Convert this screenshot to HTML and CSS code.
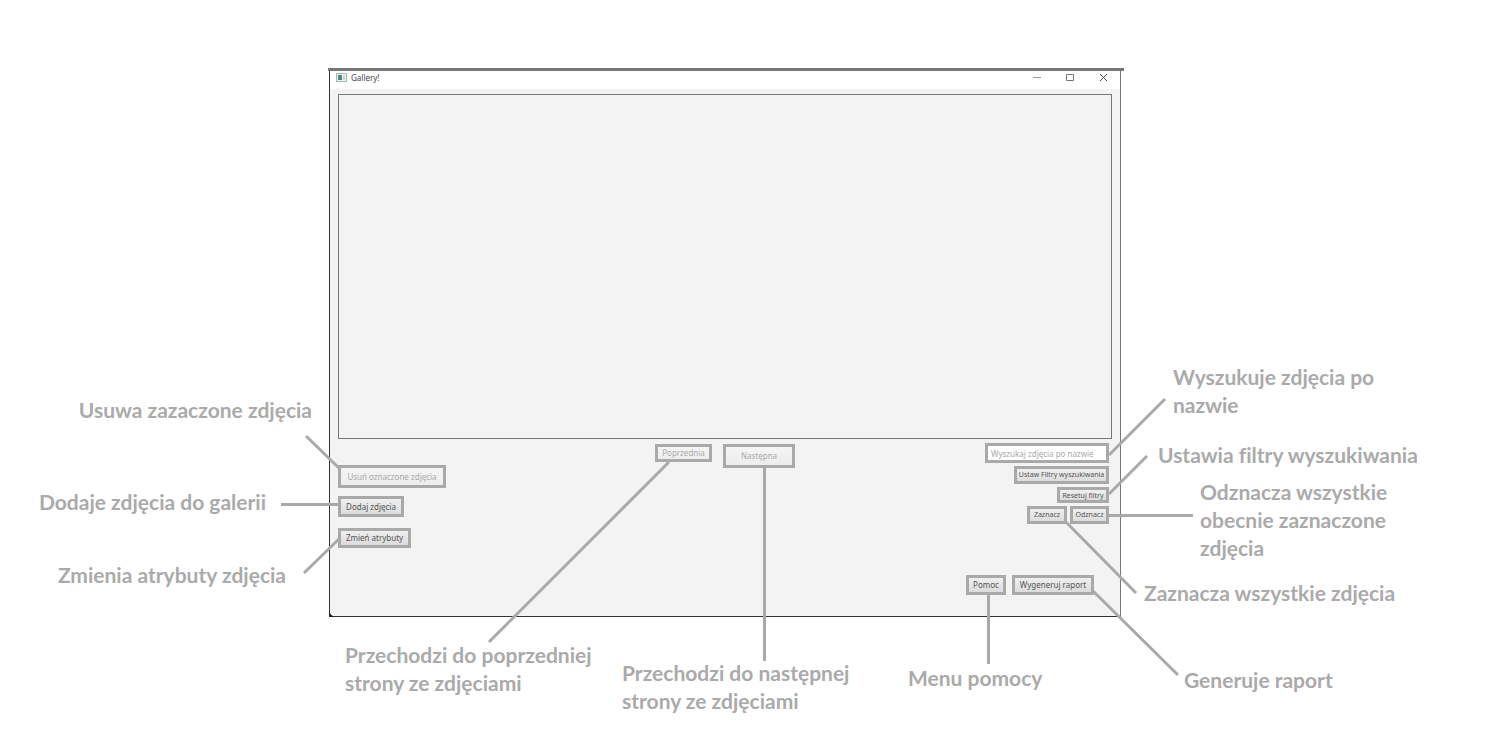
FILE: index.html
```html
<!DOCTYPE html>
<html lang="pl">
<head>
<meta charset="utf-8">
<title>Gallery!</title>
<link rel="stylesheet" href="styles.css">
</head>
<body>
<main class="guide">
  <div class="notes notes-left">
    <p class="note note-delete">Usuwa zazaczone zdjęcia</p>
    <p class="note note-add">Dodaje zdjęcia do galerii</p>
    <p class="note note-edit">Zmienia atrybuty zdjęcia</p>
  </div>

  <div class="stage">
    <section class="window">
      <header class="titlebar">
        <svg class="app-icon" viewBox="0 0 11 9" aria-hidden="true">
          <rect x="0.5" y="0.5" width="10" height="8" fill="#eef3f3" stroke="#a9b6b8"/>
          <rect x="2" y="2" width="4" height="5" fill="#4f8a7c"/>
          <rect x="7" y="2" width="2" height="5" fill="#c8d8d4"/>
        </svg>
        <h1 class="title">Gallery!</h1>
        <button class="win-button" type="button" aria-label="Minimalizuj"><svg viewBox="0 0 9 9"><path d="M0 4.5h8" stroke="#999"/></svg></button>
        <button class="win-button" type="button" aria-label="Maksymalizuj"><svg viewBox="0 0 9 9"><path d="M0.5 1.5h7v6h-7z" stroke="#777"/></svg></button>
        <button class="win-button" type="button" aria-label="Zamknij"><svg viewBox="0 0 9 9"><path d="M1 1l7 7M8 1l-7 7" stroke="#444"/></svg></button>
      </header>
      <div class="content">
        <div class="gallery"></div>
        <div class="controls">
          <div class="actions">
            <button class="button button-delete" type="button" disabled>Usuń oznaczone zdjęcia</button>
            <button class="button button-add" type="button">Dodaj zdjęcia</button>
            <button class="button button-edit" type="button">Zmień atrybuty</button>
          </div>
          <div class="pager">
            <button class="button button-previous" type="button" disabled>Poprzednia</button>
            <button class="button button-next" type="button" disabled>Następna</button>
          </div>
          <div class="tools">
            <input class="search" type="text" placeholder="Wyszukaj zdjęcia po nazwie" aria-label="Wyszukaj zdjęcia po nazwie">
            <button class="button small button-filters" type="button">Ustaw Filtry wyszukiwania</button>
            <button class="button small button-reset" type="button">Resetuj filtry</button>
            <div class="selection">
              <button class="button small button-select" type="button">Zaznacz</button>
              <button class="button small button-deselect" type="button">Odznacz</button>
            </div>
            <div class="reports">
              <button class="button button-help" type="button">Pomoc</button>
              <button class="button button-report" type="button">Wygeneruj raport</button>
            </div>
          </div>
        </div>
      </div>
    </section>
    <svg class="lines lines-left" viewBox="0 0 20 20" aria-hidden="true">
      <path d="M-23 368L11 401M-48 436.5H9M-25 505L10 471"/>
      <path d="M0 542V549H7Q1 548 0 542Z" fill="#222" stroke="none"/>
    </svg>
    <svg class="lines lines-center" viewBox="0 0 20 20" aria-hidden="true">
      <path d="M-236 574L-56 394M39.5 399V593"/>
    </svg>
    <svg class="lines lines-right" viewBox="0 0 20 20" aria-hidden="true">
      <path d="M8 387L64 331M8 426L46 388M8 447.5H92M-35 454L35 525M-112.500 527V596M-8 523L77 607"/>
    </svg>
  </div>

  <div class="notes notes-right">
    <p class="note note-search">Wyszukuje zdjęcia po nazwie</p>
    <p class="note note-filters">Ustawia filtry wyszukiwania</p>
    <p class="note note-deselect">Odznacza wszystkie obecnie zaznaczone zdjęcia</p>
    <p class="note note-select">Zaznacza wszystkie zdjęcia</p>
  </div>

  <div class="notes-bottom">
    <p class="note note-previous">Przechodzi do poprzedniej strony ze zdjęciami</p>
    <p class="note note-next">Przechodzi do następnej strony ze zdjęciami</p>
    <p class="note note-help">Menu pomocy</p>
  </div>
  <p class="note note-report">Generuje raport</p>
</main>
</body>
</html>
```
FILE: styles.css
```css
* { box-sizing: border-box; }

body {
  margin: 0;
  background: #fff;
  font-family: "Noto Sans", "Open Sans", sans-serif;
}

.guide {
  display: grid;
  grid-template-columns: 329px minmax(640px, 1fr) 364px;
  padding: 68px 0 32px;
}

.note {
  margin: 0;
  color: #aaa;
  font: 700 21px/28px Lato, "Open Sans", sans-serif;
  font-variant-ligatures: none;
}

.notes { display: flex; flex-direction: column; }

.notes-left {
  align-items: flex-end;
  padding-top: 328px;
  white-space: nowrap;
}
.note-delete { margin-right: 17px; }
.note-add { margin: 64px 63px 0 0; }
.note-edit { margin: 45px 43px 0 0; }

.notes-right { padding-top: 295px; }
.note-search { width: 230px; margin-left: 52px; }
.note-filters { margin: 22px 0 0 37px; }
.note-deselect { width: 220px; margin: 9px 0 0 79px; }
.note-select { margin: 17px 0 0 23px; }

.notes-bottom {
  grid-column: 2;
  display: flex;
  align-items: flex-start;
  padding: 24px 0 0 16px;
}
.note-previous { width: 277px; padding-right: 16px; }
.note-next { width: 286px; padding: 18px 40px 0 0; }
.note-help { padding-top: 23px; }
.note-report { padding: 49px 0 0 63px; }

.stage { position: relative; }

.window {
  border: solid #333;
  border-width: 0 1px 1px;
  border-right-color: #777;
  background: #f3f3f3;
}

/* The top edge runs slightly past both sides of the window. */
.window::before {
  content: "";
  display: block;
  height: 3px;
  margin: 0 -4px 0 -2px;
  background: #777;
}

.titlebar {
  display: flex;
  align-items: center;
  height: 18px;
  padding: 0 0 5px 6px;
  background: #fff;
}
.app-icon { width: 11px; height: 9px; }
.title {
  flex: 1;
  margin: 0 0 0 4px;
  color: #444;
  font-size: 8px;
  font-weight: 400;
  line-height: 12px;
}
.win-button {
  display: flex;
  justify-content: center;
  width: 33px;
  padding: 0;
  border: 0;
  background: none;
}
.win-button svg { width: 9px; height: 9px; fill: none; }

.content { padding: 5px 8px 21px; }

.gallery {
  height: 345px;
  border: 1px solid #777;
}

.controls {
  display: grid;
  grid-template-columns: 1fr auto 1fr;
  align-items: start;
}

.button {
  height: 20px;
  padding: 0;
  border: 3px solid #a9a9a9;
  background: linear-gradient(#efefef, #dcdcdc);
  color: #555;
  font-family: inherit;
  font-size: 8px;
  line-height: 12px;
  white-space: nowrap;
}
.button:disabled { background: linear-gradient(#f5f5f5, #ececec); color: #aaa; }
.small { height: 18px; font-size: 7px; }

.actions {
  display: flex;
  flex-direction: column;
  align-items: flex-start;
  padding-top: 26px;
}
.button-delete { width: 108px; height: 23px; }
.button-add { width: 66px; height: 21px; margin: 8px 0 11px; }
.button-edit { width: 73px; }

.pager { display: flex; align-items: flex-start; gap: 11px; padding-top: 5px; }
.button-previous { width: 57px; height: 18px; }
.button-next { width: 72px; height: 24px; }

.tools {
  display: flex;
  flex-direction: column;
  align-items: flex-end;
  gap: 3px;
  padding: 4px 3px 0 0;
}
.search {
  width: 124px;
  height: 20px;
  padding: 0 3px;
  border: 3px solid #a9a9a9;
  background: #fff;
  font-family: inherit;
  font-size: 8px;
}
.search::placeholder { color: #aaa; opacity: 1; }
.button-filters { width: 95px; }
.button-reset { width: 52px; height: 16px; }
.selection { display: flex; gap: 3px; }
.button-select { width: 40px; }
.button-deselect { width: 39px; }
.reports { display: flex; gap: 6px; margin: 48px 15px 0 0; }
.button-help { width: 40px; }
.button-report { width: 82px; }

/* Connector lines are drawn from the window edge they belong to. */
.lines {
  position: absolute;
  top: 0;
  width: 20px;
  height: 20px;
  overflow: visible;
  fill: none;
  stroke: #a9a9a9;
  stroke-width: 3;
  pointer-events: none;
}
.lines-left { left: 0; }
.lines-center { left: 50%; }
.lines-right { right: 0; }
```
